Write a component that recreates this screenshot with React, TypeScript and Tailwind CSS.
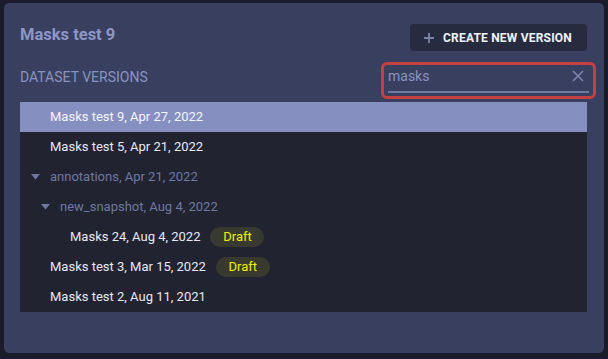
import React from "react";

const Arrow = () => (
  <svg width="9" height="6" viewBox="0 0 9 6" className="shrink-0">
    <path d="M0 0 H9 L4.5 5.5 Z" fill="#6e779f" />
  </svg>
);

const Draft = () => (
  <span className="ml-[10px] inline-flex h-[20px] w-[54px] items-center justify-center rounded-full bg-[#393a2f] text-[13px] text-[#f0f000]">
    Draft
  </span>
);

type Row = { label: string; indent: number; arrow?: boolean; muted?: boolean; selected?: boolean; draft?: boolean };

const rows: Row[] = [
  { label: "Masks test 9, Apr 27, 2022", indent: 30, selected: true },
  { label: "Masks test 5, Apr 21, 2022", indent: 30 },
  { label: "annotations, Apr 21, 2022", indent: 11, arrow: true, muted: true },
  { label: "new_snapshot, Aug 4, 2022", indent: 21, arrow: true, muted: true },
  { label: "Masks 24, Aug 4, 2022", indent: 50, draft: true },
  { label: "Masks test 3, Mar 15, 2022", indent: 30, draft: true },
  { label: "Masks test 2, Aug 11, 2021", indent: 30 },
];

export default function App() {
  return (
    <div className="h-[359px] w-[608px] bg-[#1b1c2b] pl-[4px] pr-[4px] pt-[3px] pb-[6px]" style={{ fontFamily: "Roboto, 'Noto Sans', sans-serif" }}>
      <div className="h-full w-full rounded-[5px] bg-[#383f5f] pl-[16px] pr-[17px]">
        <div className="flex h-[59px] items-start justify-between">
          <div className="pt-[23px] text-[16.5px] font-bold leading-[18px] text-[#8d96c4]">Masks test 9</div>
          <button className="mt-[21px] flex h-[27px] w-[177px] items-center rounded-[4px] bg-[#272b3f] pl-[13px]">
            <svg width="12" height="12" viewBox="0 0 12 12" className="mr-[8px]">
              <path d="M6 1 V11 M1 6 H11" stroke="#7a82a8" strokeWidth="1.8" />
            </svg>
            <span className="text-[12px] font-bold tracking-[0.2px] text-[#f2f3fa]">CREATE NEW VERSION</span>
          </button>
        </div>
        <div className="flex h-[40px] items-start justify-between">
          <div className="mt-[7px] text-[14px] leading-[16px] text-[#8a93c0]">DATASET VERSIONS</div>
          <div className="mr-[-9px] flex h-[37px] w-[215px] items-start rounded-[6px] border-[3px] border-[#c5413f] px-[4px]">
            <div className="mt-[1px] flex h-[27px] w-full items-center justify-between border-b-2 border-[#6f78a0] pb-[5px]">
              <span className="text-[14px] leading-[16px] text-[#8a93c0]">masks</span>
              <svg width="12" height="12" viewBox="0 0 12 12" className="mr-[5px]">
                <path d="M1 1 L11 11 M11 1 L1 11" stroke="#7d86ae" strokeWidth="1.6" />
              </svg>
            </div>
          </div>
        </div>
        <div className="bg-[#212331]">
          {rows.map((r, i) => (
            <div
              key={i}
              className={`flex h-[30px] items-center text-[13px] ${r.selected ? "bg-[#8690c0] text-[#f4f5fb]" : r.muted ? "text-[#6f78a2]" : "text-[#e6e8f4]"}`}
              style={{ paddingLeft: r.indent }}
            >
              {r.arrow && <span className="mr-[10px]"><Arrow /></span>}
              <span>{r.label}</span>
              {r.draft && <Draft />}
            </div>
          ))}
        </div>
      </div>
    </div>
  );
}
